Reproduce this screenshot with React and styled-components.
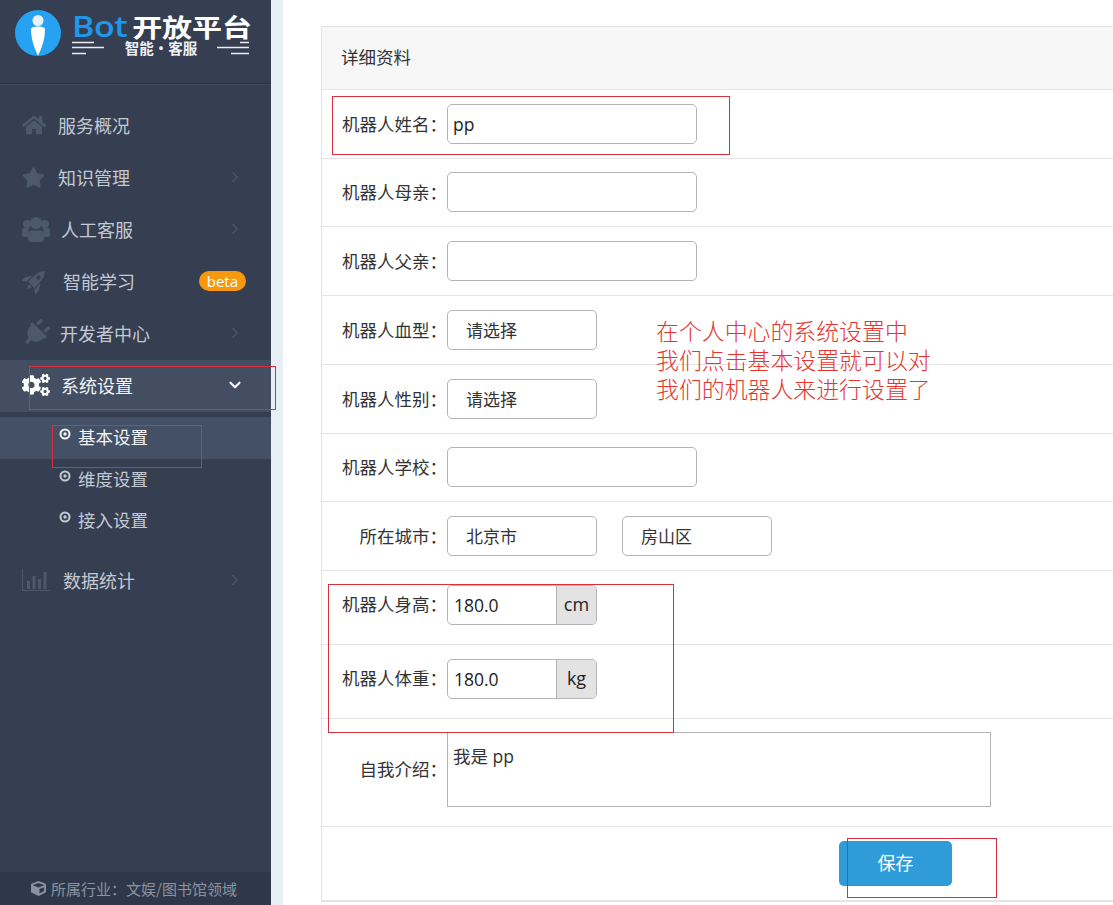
import React from "react";
import styled, { createGlobalStyle } from "styled-components";
import { FaHome, FaStar, FaPlug, FaCogs, FaCube } from "react-icons/fa";
import { ChevronRight, ChevronDown } from "lucide-react";

const GlobalStyle = createGlobalStyle`
  html, body {
    margin: 0;
    padding: 0;
    background: #fff;
  }
  body {
    font-family: "Noto Sans CJK SC", "Noto Sans", sans-serif;
    overflow: hidden;
  }
  * {
    box-sizing: border-box;
  }
`;

const Page = styled.div`
  position: relative;
  display: flex;
  width: 1113px;
  height: 905px;
  overflow: hidden;
  background: #fff;
`;

const Sidebar = styled.aside`
  display: flex;
  flex-direction: column;
  flex: 0 0 271px;
  height: 905px;
  background: #363f52;
`;

const Brand = styled.div`
  display: flex;
  height: 84px;
  padding: 10px 0 0 15px;
  gap: 11px;
  border-bottom: 1px solid #2a3140;
  box-shadow: 0 1px 0 #414a5d;
`;

const BrandText = styled.div`
  display: flex;
  flex-direction: column;
  width: 178px;
`;

const BrandTop = styled.div`
  display: flex;
  align-items: center;
  height: 26px;
  margin-top: 3px;
  transform: scaleY(0.84);
`;

const BrandBot = styled.span`
  font-family: "Open Sans", sans-serif;
  font-size: 34px;
  line-height: 26px;
  font-weight: 600;
  color: #1e98ea;
  letter-spacing: -0.5px;
`;

const BrandName = styled.span`
  margin-left: 5px;
  font-size: 30px;
  line-height: 26px;
  font-weight: 700;
  color: #fff;
  white-space: nowrap;
`;

const BrandBottom = styled.div`
  display: flex;
  align-items: center;
  justify-content: space-between;
  height: 15px;
  margin-top: 1px;
`;

const Tagline = styled.span`
  font-size: 14.5px;
  line-height: 15px;
  font-weight: 700;
  color: #eef1f5;
  white-space: nowrap;
`;

const Menu = styled.nav`
  display: flex;
  flex-direction: column;
  padding-top: 16px;
`;

const MenuItem = styled.div`
  display: flex;
  align-items: center;
  height: 52px;
  padding: 0 27px 2px 22px;
  font-size: 18px;
  color: ${(p) => (p.$active ? "#f2f4f7" : "#c3c9d3")};
  background: ${(p) => (p.$active ? "#434e63" : "transparent")};
`;

const MenuIcon = styled.span`
  display: flex;
  align-items: center;
  justify-content: flex-start;
  flex: 0 0 ${(p) => p.$slot}px;
  font-size: ${(p) => p.$size}px;
  color: ${(p) => (p.$active ? "#ffffff" : "#4c586b")};
  svg {
    transform: rotate(${(p) => p.$turn || 0}deg);
  }
`;

const MenuLabel = styled.span`
  flex: 1;
  white-space: nowrap;
`;

const Chevron = styled.span`
  display: flex;
  color: ${(p) => (p.$open ? "#f2f4f7" : "#4c586b")};
`;

const Badge = styled.span`
  display: flex;
  align-items: center;
  height: 20px;
  margin-right: -2px;
  padding: 0 8px;
  border-radius: 10px;
  background: #f7980f;
  color: #fff;
  font-family: "Open Sans", sans-serif;
  font-size: 15px;
  font-weight: 500;
`;

const SubMenu = styled.div`
  display: flex;
  flex-direction: column;
  padding: 5px 0 13.5px;
`;

const SubItem = styled.div`
  display: flex;
  align-items: center;
  height: 41.5px;
  padding: 0 0 2px 59px;
  gap: 7px;
  font-size: 17.5px;
  background: ${(p) => (p.$active ? "#445066" : "transparent")};
  color: ${(p) => (p.$active ? "#f2f4f7" : "#c3c9d3")};
  svg {
    margin-top: -5px;
  }
`;

const SideFooter = styled.div`
  display: flex;
  align-items: center;
  gap: 5px;
  height: 33px;
  margin-top: auto;
  padding-left: 31px;
  background: #2f384a;
  color: #8b93a1;
  font-size: 15px;
  white-space: nowrap;
`;

const Gutter = styled.div`
  flex: 0 0 12px;
  background: #e9eef5;
`;

const Content = styled.main`
  flex: 0 0 1200px;
  padding: 26px 0 0 38px;
`;

const Card = styled.section`
  border: 1px solid #e4e4e4;
  border-right: none;
`;

const CardHeader = styled.div`
  display: flex;
  align-items: center;
  height: 63px;
  padding: 0 0 3px 19px;
  background: #f7f7f7;
  border-bottom: 1px solid #e4e4e4;
  font-size: 17.5px;
  color: #333;
`;

const Row = styled.div`
  display: flex;
  align-items: ${(p) => (p.$top ? "flex-start" : "center")};
  height: ${(p) => p.$h}px;
  padding-top: ${(p) => p.$pad || 0}px;
  padding-bottom: ${(p) => (p.$h === 68 ? 1 : 0)}px;
  border-bottom: 1px solid #e4e4e4;
`;

const Label = styled.label`
  flex: 0 0 125px;
  text-align: right;
  font-size: 17.5px;
  line-height: ${(p) => p.$lh || 38}px;
  color: #333;
  white-space: nowrap;
`;

const TextField = styled.div`
  display: flex;
  align-items: center;
  width: 250px;
  height: 40px;
  padding: 0 5px;
  border: 1px solid #b4b4b4;
  border-radius: 5px;
  font-family: "Open Sans", sans-serif;
  font-size: 17.5px;
  color: #222;
  background: #fff;
`;

const SelectBox = styled.div`
  display: flex;
  align-items: center;
  width: 150px;
  height: 40px;
  padding: 0 0 1px 18px;
  border: 1px solid #b4b4b4;
  border-radius: 5px;
  font-size: 17px;
  color: #333;
  background: #fff;
`;

const SelectGap = styled.div`
  display: flex;
  gap: 25px;
`;

const Group = styled.div`
  display: flex;
  width: 150px;
  height: 40px;
  border: 1px solid #b4b4b4;
  border-radius: 5px;
  overflow: hidden;
  font-family: "Open Sans", sans-serif;
  font-size: 17.5px;
  color: #222;
`;

const GroupValue = styled.div`
  display: flex;
  align-items: center;
  flex: 1;
  padding-left: 6px;
`;

const GroupUnit = styled.div`
  display: flex;
  align-items: center;
  justify-content: center;
  flex: 0 0 40px;
  padding-bottom: 2px;
  border-left: 1px solid #b4b4b4;
  background: #e3e3e3;
  font-size: 18px;
`;

const TextArea = styled.div`
  width: 544px;
  height: 75px;
  padding: 9px 5px;
  border: 1px solid #b4b4b4;
  font-family: "Open Sans", "Noto Sans CJK SC", sans-serif;
  font-size: 17.5px;
  line-height: 28px;
  color: #333;
`;

const SaveButton = styled.button`
  width: 113px;
  height: 45px;
  margin-left: 517px;
  padding: 0 0 4px;
  border: none;
  border-radius: 5px;
  background: #2d9cd8;
  color: #fff;
  font-family: inherit;
  font-size: 18px;
`;

const Mark = styled.div`
  position: absolute;
  left: ${(p) => p.$x}px;
  top: ${(p) => p.$y}px;
  width: ${(p) => p.$w}px;
  height: ${(p) => p.$h}px;
  border: 1px solid #d9303f;
  pointer-events: none;
`;

const Note = styled.div`
  position: absolute;
  left: 656px;
  top: 316px;
  font-size: 22.9px;
  line-height: 29px;
  font-weight: 300;
  color: #e6352f;
  white-space: nowrap;
`;

const LogoMark = () => (
  <svg width="46" height="46" viewBox="0 0 46 46">
    <circle cx="23" cy="23" r="23" fill="#27a2f2" />
    <circle cx="23" cy="10.5" r="5.5" fill="#e8f2f8" />
    <path d="M16 19C16 15.5 30 15.5 30 19C30 30 26 40 23 45.5C20 40 16 30 16 19Z" fill="#fff" />
  </svg>
);

const BrandLines = ({ d }) => (
  <svg width="33" height="14" viewBox="0 0 33 14">
    <path d={d} stroke="#e9edf2" strokeWidth="1.3" fill="none" />
  </svg>
);

const UsersIcon = () => (
  <svg width="28" height="28" viewBox="0 0 28 28" fill="currentColor">
    <circle cx="5" cy="9" r="4" />
    <circle cx="23" cy="9" r="4" />
    <circle cx="14" cy="8" r="6" />
    <path d="M0 15c0-1 1-2 2-2h5c-1 2-1 6 0 9H2c-1 0-2-1-2-2zM28 15c0-1-1-2-2-2h-5c1 2 1 6 0 9h5c1 0 2-1 2-2z" />
    <path d="M9 15.5h10c2 0 3 2 3 5V24c0 1.5-1 3-3 3H9c-2 0-3-1.500-3-3v-3.500c0-3 1-5 3-5z" />
  </svg>
);

const RocketIcon = () => (
  <svg width="26" height="26" viewBox="0 0 24 24" fill="currentColor">
    <g transform="rotate(45 12 12)">
      <path
        fillRule="evenodd"
        d="M12-1C15 2 16 6 16 10V17H8V10C8 6 9 2 12-1ZM12 5.500a2 2 0 1 0 0 4 2 2 0 0 0 0-4Z"
      />
      <path d="M7 10L3 16V21L7 18ZM17 10L21 16V21L17 18ZM10 18H14L12 23Z" />
    </g>
  </svg>
);

const ChartIcon = () => (
  <svg width="28" height="22" viewBox="0 0 28 22" fill="currentColor">
    <path d="M.5 0V21.500H28" stroke="currentColor" strokeWidth="1.200" fill="none" />
    <path d="M5 12h3v8H5zM10.500 7h3v13h-3zM16 10h3v10h-3zM21.500 3h3v17h-3z" />
  </svg>
);

const DotIcon = () => (
  <svg width="12" height="12" viewBox="0 0 12 12">
    <circle cx="6" cy="6" r="4.500" stroke="currentColor" strokeWidth="2" fill="none" />
    <circle cx="6" cy="6" r="1.700" fill="currentColor" />
  </svg>
);

const navItems = [
  { label: "服务概况", icon: <FaHome />, slot: 36, size: 24 },
  { label: "知识管理", icon: <FaStar />, slot: 36, size: 23, chevron: true },
  { label: "人工客服", icon: <UsersIcon />, slot: 39, size: 28, chevron: true },
  { label: "智能学习", icon: <RocketIcon />, slot: 41, size: 23, badge: "beta" },
  { label: "开发者中心", icon: <FaPlug />, slot: 38, size: 28, turn: 45, chevron: true },
];

const subItems = ["基本设置", "维度设置", "接入设置"];

const fields = [
  ["机器人姓名：", "pp", 69],
  ["机器人母亲：", "", 68],
  ["机器人父亲：", "", 69],
];

export default function App() {
  return (
    <Page>
      <GlobalStyle />
      <Sidebar>
        <Brand>
          <LogoMark />
          <BrandText>
            <BrandTop>
              <BrandBot>Bot</BrandBot>
              <BrandName>开放平台</BrandName>
            </BrandTop>
            <BrandBottom>
              <BrandLines d="M0 1.500H22M0 6.500H32M0 12.500H14" />
              <Tagline>智能·客服</Tagline>
              <BrandLines d="M23 1.500H32M0 6.500H32M14 12.500H32" />
            </BrandBottom>
          </BrandText>
        </Brand>
        <Menu>
          {navItems.map((item) => (
            <MenuItem key={item.label}>
              <MenuIcon $slot={item.slot} $size={item.size} $turn={item.turn}>
                {item.icon}
              </MenuIcon>
              <MenuLabel>{item.label}</MenuLabel>
              {item.badge && <Badge>{item.badge}</Badge>}
              {item.chevron && (
                <Chevron>
                  <ChevronRight size={18} strokeWidth={1.5} />
                </Chevron>
              )}
            </MenuItem>
          ))}
          <MenuItem $active>
            <MenuIcon $slot={39} $size={28} $active>
              <FaCogs />
            </MenuIcon>
            <MenuLabel>系统设置</MenuLabel>
            <Chevron $open>
              <ChevronDown size={18} strokeWidth={3} />
            </Chevron>
          </MenuItem>
          <SubMenu>
            {subItems.map((label, i) => (
              <SubItem key={label} $active={i === 0}>
                <DotIcon />
                {label}
              </SubItem>
            ))}
          </SubMenu>
          <MenuItem>
            <MenuIcon $slot={41} $size={28}>
              <ChartIcon />
            </MenuIcon>
            <MenuLabel>数据统计</MenuLabel>
            <Chevron>
              <ChevronRight size={18} strokeWidth={1.5} />
            </Chevron>
          </MenuItem>
        </Menu>
        <SideFooter>
          <FaCube />
          所属行业：文娱/图书馆领域
        </SideFooter>
      </Sidebar>
      <Gutter />
      <Content>
        <Card>
          <CardHeader>详细资料</CardHeader>
          {fields.map(([label, value, h]) => (
            <Row key={label} $h={h}>
              <Label>{label}</Label>
              <TextField>{value}</TextField>
            </Row>
          ))}
          <Row $h={69}>
            <Label>机器人血型：</Label>
            <SelectBox>请选择</SelectBox>
          </Row>
          <Row $h={69}>
            <Label>机器人性别：</Label>
            <SelectBox>请选择</SelectBox>
          </Row>
          <Row $h={68}>
            <Label>机器人学校：</Label>
            <TextField />
          </Row>
          <Row $h={69}>
            <Label>所在城市：</Label>
            <SelectGap>
              <SelectBox>北京市</SelectBox>
              <SelectBox>房山区</SelectBox>
            </SelectGap>
          </Row>
          <Row $h={74} $top $pad={14}>
            <Label>机器人身高：</Label>
            <Group>
              <GroupValue>180.0</GroupValue>
              <GroupUnit>cm</GroupUnit>
            </Group>
          </Row>
          <Row $h={74} $top $pad={14}>
            <Label>机器人体重：</Label>
            <Group>
              <GroupValue>180.0</GroupValue>
              <GroupUnit>kg</GroupUnit>
            </Group>
          </Row>
          <Row $h={108} $top $pad={13}>
            <Label $lh={73}>自我介绍：</Label>
            <TextArea>我是 pp</TextArea>
          </Row>
          <Row $h={74} $top $pad={14}>
            <SaveButton>保存</SaveButton>
          </Row>
        </Card>
      </Content>
      <Mark $x={332} $y={96} $w={398} $h={59} />
      <Mark $x={29} $y={366} $w={247} $h={44} />
      <Mark $x={52} $y={425} $w={150} $h={43} />
      <Mark $x={328} $y={584} $w={346} $h={149} />
      <Mark $x={847} $y={838} $w={150} $h={60} />
      <Note>
        在个人中心的系统设置中
        <br />
        我们点击基本设置就可以对
        <br />
        我们的机器人来进行设置了
      </Note>
    </Page>
  );
}
